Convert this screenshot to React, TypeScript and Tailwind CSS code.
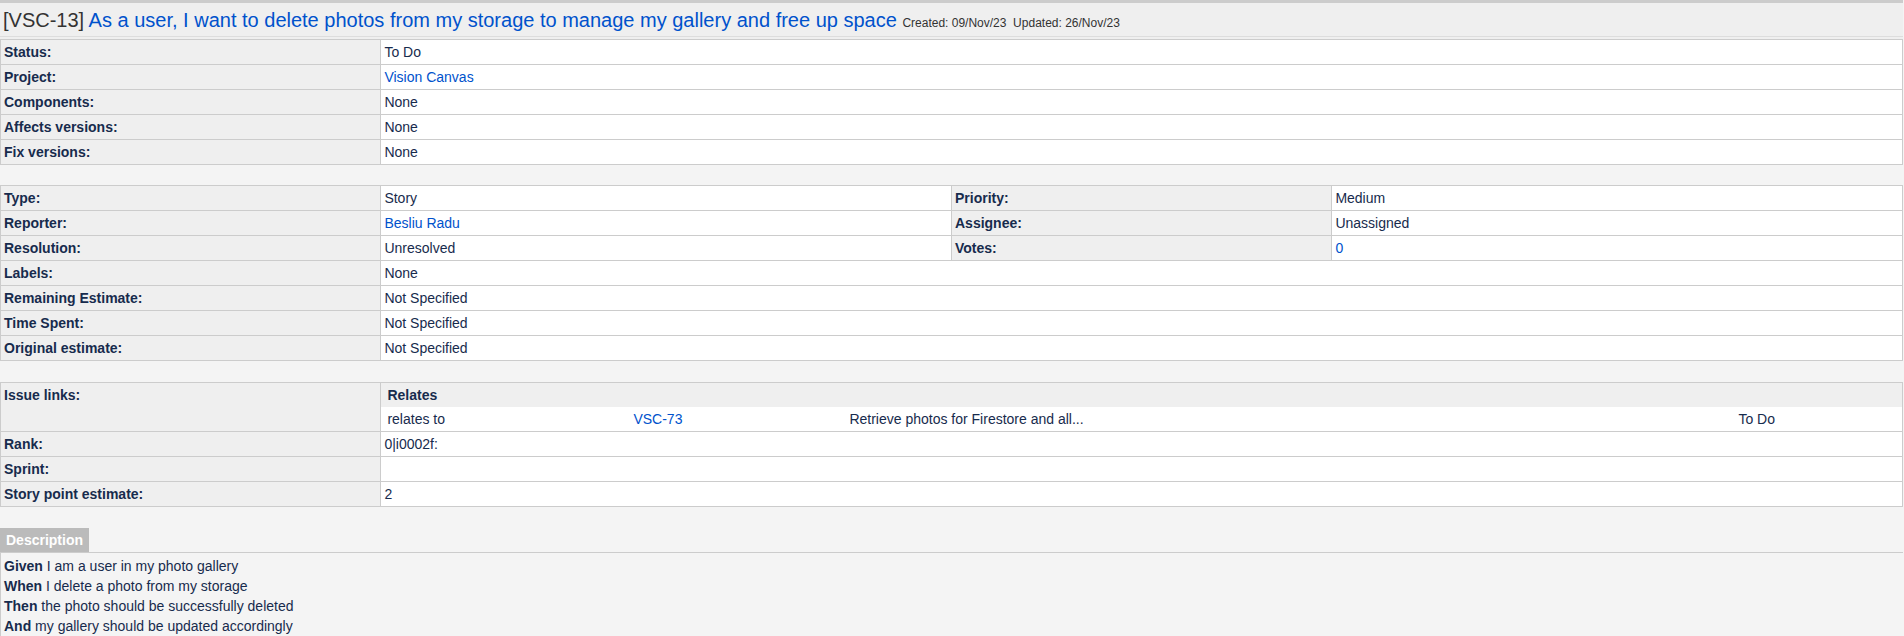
import { ReactNode } from "react";

const font = { fontFamily: '"Liberation Sans", Arial, sans-serif' };

function Label({ children }: { children: ReactNode }) {
  return (
    <td className="border border-[#cccccc] bg-[#efefef] px-[3px] py-[4px] align-top text-[14px] leading-[16px] font-bold text-[#172b4d]">
      {children}
    </td>
  );
}

function Value({ children, link, colSpan }: { children?: ReactNode; link?: boolean; colSpan?: number }) {
  return (
    <td
      colSpan={colSpan}
      className={
        "border border-[#cccccc] bg-white px-[3px] py-[4px] align-top text-[14px] leading-[16px] " +
        (link ? "text-[#0052cc]" : "text-[#172b4d]")
      }
    >
      {children}
    </td>
  );
}

function DescLine({ head, text }: { head: string; text: string }) {
  return (
    <p className="leading-[20px]">
      <b className="font-bold">{head}</b> {text}
    </p>
  );
}

export default function App() {
  return (
    <div className="min-h-screen bg-[#f4f4f4] text-[#172b4d]" style={font}>
      <div className="w-[1903px] border-t-[3px] border-[#cccccc] bg-[#efefef] pt-[5px] pb-[2px]">
        <div className="border-b border-[#dddddd] pb-[4px] pl-[3px] text-[20px] leading-[24px]">
          <span className="text-[#333333]">[VSC-13]</span>{" "}
          <a className="text-[#0052cc]">
            As a user, I want to delete photos from my storage to manage my gallery and free up space
          </a>{" "}
          <span className="text-[12px] leading-none text-[#333333]">
            Created: 09/Nov/23&nbsp; Updated: 26/Nov/23
          </span>
        </div>
      </div>

      <table className="w-[1903px] table-fixed border-collapse">
        <colgroup>
          <col className="w-[20%]" />
          <col className="w-[80%]" />
        </colgroup>
        <tbody>
          <tr><Label>Status:</Label><Value>To Do</Value></tr>
          <tr><Label>Project:</Label><Value link>Vision Canvas</Value></tr>
          <tr><Label>Components:</Label><Value>None</Value></tr>
          <tr><Label>Affects versions:</Label><Value>None</Value></tr>
          <tr><Label>Fix versions:</Label><Value>None</Value></tr>
        </tbody>
      </table>

      <table className="mt-5 w-[1903px] table-fixed border-collapse">
        <colgroup>
          <col className="w-[20%]" />
          <col className="w-[30%]" />
          <col className="w-[20%]" />
          <col className="w-[30%]" />
        </colgroup>
        <tbody>
          <tr><Label>Type:</Label><Value>Story</Value><Label>Priority:</Label><Value>Medium</Value></tr>
          <tr><Label>Reporter:</Label><Value link>Besliu Radu</Value><Label>Assignee:</Label><Value>Unassigned</Value></tr>
          <tr><Label>Resolution:</Label><Value>Unresolved</Value><Label>Votes:</Label><Value link>0</Value></tr>
          <tr><Label>Labels:</Label><Value colSpan={3}>None</Value></tr>
          <tr><Label>Remaining Estimate:</Label><Value colSpan={3}>Not Specified</Value></tr>
          <tr><Label>Time Spent:</Label><Value colSpan={3}>Not Specified</Value></tr>
          <tr><Label>Original estimate:</Label><Value colSpan={3}>Not Specified</Value></tr>
        </tbody>
      </table>

      <table className="mt-[21px] w-[1903px] table-fixed border-collapse">
        <colgroup>
          <col className="w-[20%]" />
          <col className="w-[80%]" />
        </colgroup>
        <tbody>
          <tr>
            <Label>Issue links:</Label>
            <td className="border border-[#cccccc] bg-white p-0 align-top text-[14px] leading-[16px]">
              <table className="w-full table-fixed border-collapse">
                <colgroup>
                  <col className="w-[246px]" />
                  <col className="w-[216px]" />
                  <col className="w-[889px]" />
                  <col />
                </colgroup>
                <tbody>
                  <tr>
                    <td colSpan={4} className="bg-[#efefef] pl-[6px] py-[4px] font-bold">
                      Relates
                    </td>
                  </tr>
                  <tr>
                    <td className="pl-[6px] py-[4px]">relates to</td>
                    <td className="pl-[6px] py-[4px] text-[#0052cc]">VSC-73</td>
                    <td className="pl-[6px] py-[4px]">Retrieve photos for Firestore and all...</td>
                    <td className="pl-[6px] py-[4px]">To Do</td>
                  </tr>
                </tbody>
              </table>
            </td>
          </tr>
          <tr><Label>Rank:</Label><Value>0|i0002f:</Value></tr>
          <tr><Label>Sprint:</Label><Value></Value></tr>
          <tr><Label>Story point estimate:</Label><Value>2</Value></tr>
        </tbody>
      </table>

      <div className="mt-[21px]">
        <div className="w-fit bg-[#bbbbbb] px-[6px] py-[4px] text-[14px] leading-[16px] font-bold text-white">
          Description
        </div>
        <div className="w-[1903px] border-t border-l border-[#cccccc] px-[3px] pt-[3px] text-[14px]">
          <DescLine head="Given" text="I am a user in my photo gallery" />
          <DescLine head="When" text="I delete a photo from my storage" />
          <DescLine head="Then" text="the photo should be successfully deleted" />
          <DescLine head="And" text="my gallery should be updated accordingly" />
        </div>
      </div>
    </div>
  );
}
